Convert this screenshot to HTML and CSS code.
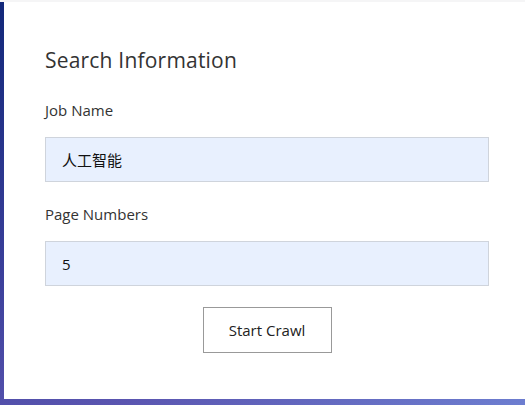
FILE: index.html
```html
<!DOCTYPE html>
<html>
<head>
<meta charset="utf-8">
<link rel="stylesheet" href="styles.css">
</head>
<body>
<div class="bg">
  <div class="card">
    <h2 class="title">Search Information</h2>
    <form class="form">
      <div class="field">
        <label class="label">Job Name</label>
        <div class="input">人工智能</div>
      </div>
      <div class="field">
        <label class="label">Page Numbers</label>
        <div class="input">5</div>
      </div>
      <div class="actions">
        <button type="button" class="btn">Start Crawl</button>
      </div>
    </form>
  </div>
</div>
</body>
</html>
```
FILE: styles.css
```css
html, body {
  margin: 0;
  padding: 0;
  background: #f5f5f6;
  font-family: "Open Sans", "Noto Sans CJK SC", sans-serif;
}
.bg {
  margin-top: 2px;
  height: 403px;
  box-sizing: border-box;
  padding: 0 0 6px 4px;
  background: linear-gradient(160deg, #12287a 0%, #3a3f9a 45%, #5a55b0 75%, #6d7ed0 100%);
}
.card {
  background: #fff;
  height: 397px;
  box-sizing: border-box;
  padding: 43px 36px 0 41px;
}
.title {
  margin: 0;
  font-size: 21px;
  font-weight: 400;
  letter-spacing: 0.2px;
  line-height: 30px;
  color: #333;
}
.form {
  margin-top: 24px;
  display: flex;
  flex-direction: column;
}
.field {
  display: flex;
  flex-direction: column;
  margin-bottom: 21px;
}
.label {
  font-size: 15px;
  line-height: 22px;
  color: #333;
  margin-bottom: 16px;
}
.input {
  height: 45px;
  box-sizing: border-box;
  border: 1px solid #cfd4dc;
  background: #e8f0fe;
  padding: 0 16px;
  display: flex;
  align-items: center;
  font-size: 15px;
  color: #111;
}
.actions {
  display: flex;
  justify-content: center;
}
.btn {
  width: 129px;
  height: 46px;
  border: 1px solid #999;
  background: #fff;
  font-family: "Open Sans", sans-serif;
  font-size: 15px;
  color: #222;
  cursor: pointer;
}
```
